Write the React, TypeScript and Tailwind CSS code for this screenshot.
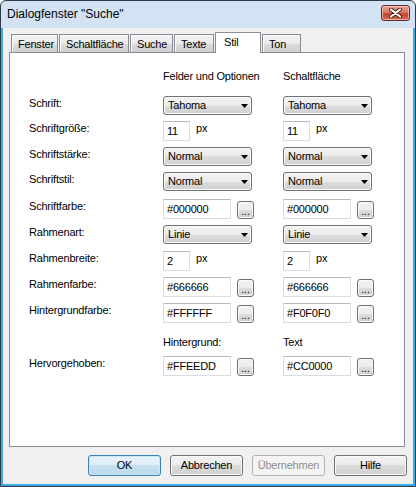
import React from "react";

function CloseBtn() {
  return (
    <div className="w-[29px] h-[16px] rounded-[3px] border border-[#5E2A2A] bg-[linear-gradient(to_bottom,#E8A596_0%,#D67A66_45%,#C2462E_55%,#D26A4E_100%)] shadow-[inset_0_0_0_1px_rgba(255,220,210,0.6)] flex items-center justify-center">
      <svg width="13" height="10" viewBox="0 0 13 10">
        <path d="M2 1.5 L11 8.5 M11 1.5 L2 8.5" stroke="#4A1A14" strokeWidth="4" strokeLinecap="round" />
        <path d="M2 1.5 L11 8.5 M11 1.5 L2 8.5" stroke="#FFFFFF" strokeWidth="2.2" strokeLinecap="round" />
      </svg>
    </div>
  );
}

function Sel({ v }: { v: string }) {
  return (
    <div className="w-[89px] h-[19px] rounded-[3px] border border-[#707070] bg-[linear-gradient(to_bottom,#F2F2F2_0%,#EBEBEB_50%,#DDDDDD_50%,#CFCFCF_100%)] shadow-[inset_0_0_0_1px_#FAFAFA] flex items-center justify-between pl-[4px] pr-[2px] leading-[13px]">
      <span>{v}</span>
      <svg width="7" height="4" viewBox="0 0 7 4" className="mr-[1px]">
        <path d="M0 0 H7 L3.5 4 Z" fill="#000" />
      </svg>
    </div>
  );
}

function Inp({ v, w }: { v: string; w: string }) {
  return (
    <div className={`${w} h-[20px] border border-[#D9DDE3] border-t-[#B5B9C1] bg-white flex items-center pl-[3px] leading-[13px]`}>
      {v}
    </div>
  );
}

function Dots() {
  return (
    <div className="w-[17px] h-[18px] mt-[2px] ml-[6px] rounded-[3px] border border-[#707070] bg-[linear-gradient(to_bottom,#F2F2F2_0%,#EBEBEB_50%,#DDDDDD_50%,#CFCFCF_100%)] shadow-[inset_0_0_0_1px_#FAFAFA] flex items-end justify-center pb-[3px] leading-[8px] text-[11px]">
      ...
    </div>
  );
}

function Color({ v }: { v: string }) {
  return (
    <div className="flex items-start">
      <Inp v={v} w="w-[68px]" />
      <Dots />
    </div>
  );
}

function Size({ v }: { v: string }) {
  return (
    <div className="flex items-start">
      <Inp v={v} w="w-[27px]" />
      <span className="ml-[6px] pt-[1px] leading-[13px]">px</span>
    </div>
  );
}

function Row({
  h,
  label,
  a,
  b,
}: {
  h: string;
  label?: string;
  a: React.ReactNode;
  b: React.ReactNode;
}) {
  return (
    <div className={`${h} flex items-start shrink-0`}>
      <div className="w-[134px] pt-[1px] leading-[13px]">{label}</div>
      <div className="w-[120px]">{a}</div>
      <div>{b}</div>
    </div>
  );
}

function Tab({ label, w, sel }: { label: string; w: string; sel?: boolean }) {
  if (sel) {
    return (
      <div
        className={`${w} h-[21px] -mb-[1px] relative z-10 border-t border-x border-[#898C95] bg-white pl-[8px] pt-[3px] leading-[13px] shrink-0`}
      >
        {label}
      </div>
    );
  }
  return (
    <div
      className={`${w} h-[18px] border-t border-x border-[#898C95] bg-[linear-gradient(to_bottom,#F3F3F3_0%,#EBEBEB_50%,#DDDDDD_50%,#CFCFCF_100%)] shadow-[inset_1px_1px_0_#FCFCFC] pl-[6px] pt-[3px] leading-[13px] shrink-0`}
    >
      {label}
    </div>
  );
}

function Btn({ label, kind }: { label: string; kind?: "def" | "dis" }) {
  const base =
    "w-[73px] h-[21px] rounded-[3px] border flex items-center justify-center leading-[13px] shrink-0";
  if (kind === "def")
    return (
      <div
        className={`${base} border-[#3C7FB1] bg-[linear-gradient(to_bottom,#EAF4FB_0%,#DDEDF8_50%,#C8E1F2_50%,#BBD8EE_100%)] shadow-[inset_0_0_0_1px_#C8E8F8]`}
      >
        {label}
      </div>
    );
  if (kind === "dis")
    return (
      <div className={`${base} border-[#ADB2B5] bg-[#F4F4F4] text-[#8D8D8D]`}>{label}</div>
    );
  return (
    <div
      className={`${base} border-[#707070] bg-[linear-gradient(to_bottom,#F2F2F2_0%,#EBEBEB_50%,#DDDDDD_50%,#CFCFCF_100%)] shadow-[inset_0_0_0_1px_#FAFAFA]`}
    >
      {label}
    </div>
  );
}

export default function App() {
  return (
    <div className="w-[416px] h-[487px] font-['Liberation_Sans',Arial,sans-serif] text-[11px] tracking-[-0.2px] text-black">
      <div className="w-full h-full flex flex-col rounded-t-[6px] border border-[#2F3A48] bg-[linear-gradient(to_bottom,#D4E3F4_0%,#BDD3EB_100%)] overflow-hidden">
        <div className="h-[27px] shrink-0 flex items-start justify-between pl-[6px] pr-[5px]">
          <span className="text-[12px] leading-[14px] pt-[6px] tracking-normal">Dialogfenster "Suche"</span>
          <div className="pt-[4px]">
            <CloseBtn />
          </div>
        </div>
        <div className="flex-1 border-x-2 border-b-2 border-[#3FACE3] bg-[#F0F0F0] flex flex-col">
          <div className="pt-[4px] pl-[6px]">
            <div className="h-[20px] flex items-end pl-[2px] gap-[1px]">
              <Tab label="Fenster" w="w-[47px]" />
              <Tab label="Schaltfläche" w="w-[70px]" />
              <Tab label="Suche" w="w-[43px]" />
              <Tab label="Texte" w="w-[40px]" />
              <Tab label="Stil" w="w-[46px]" sel />
              <Tab label="Ton" w="w-[39px]" />
            </div>
            <div className="w-[396px] h-[395px] border border-[#898C95] bg-white flex flex-col pl-[19px] pt-[17px]">
              <Row
                h="h-[26px]"
                a={<div className="leading-[13px]">Felder und Optionen</div>}
                b={<div className="leading-[13px]">Schaltfläche</div>}
              />
              <Row h="h-[25px]" label="Schrift:" a={<Sel v="Tahoma" />} b={<Sel v="Tahoma" />} />
              <Row h="h-[26px]" label="Schriftgröße:" a={<Size v="11" />} b={<Size v="11" />} />
              <Row h="h-[25px]" label="Schriftstärke:" a={<Sel v="Normal" />} b={<Sel v="Normal" />} />
              <Row h="h-[27px]" label="Schriftstil:" a={<Sel v="Normal" />} b={<Sel v="Normal" />} />
              <Row h="h-[26px]" label="Schriftfarbe:" a={<Color v="#000000" />} b={<Color v="#000000" />} />
              <Row h="h-[26px]" label="Rahmenart:" a={<Sel v="Linie" />} b={<Sel v="Linie" />} />
              <Row h="h-[26px]" label="Rahmenbreite:" a={<Size v="2" />} b={<Size v="2" />} />
              <Row h="h-[26px]" label="Rahmenfarbe:" a={<Color v="#666666" />} b={<Color v="#666666" />} />
              <Row h="h-[33px]" label="Hintergrundfarbe:" a={<Color v="#FFFFFF" />} b={<Color v="#F0F0F0" />} />
              <Row
                h="h-[20px]"
                a={<div className="leading-[13px]">Hintergrund:</div>}
                b={<div className="leading-[13px]">Text</div>}
              />
              <Row h="h-[26px]" label="Hervorgehoben:" a={<Color v="#FFEEDD" />} b={<Color v="#CC0000" />} />
            </div>
          </div>
          <div className="mt-[8px] pr-[6px] flex justify-end gap-[9px]">
            <Btn label="OK" kind="def" />
            <Btn label="Abbrechen" />
            <Btn label="Übernehmen" kind="dis" />
            <Btn label="Hilfe" />
          </div>
        </div>
      </div>
    </div>
  );
}
